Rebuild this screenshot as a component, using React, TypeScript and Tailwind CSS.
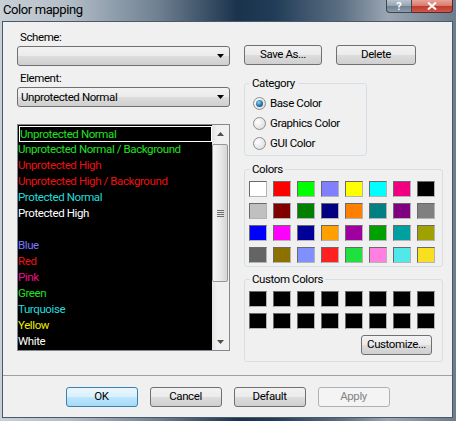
import React from "react";

const btn =
  "flex items-center justify-center rounded-[3px] border border-[#707070] bg-[linear-gradient(#f2f2f2_0%,#ebebeb_50%,#dddddd_50%,#cfcfcf_100%)] text-black";

const swatchColors = [
  ["#ffffff", "#ff0000", "#00ff00", "#8080ff", "#ffff00", "#00ffff", "#f00080", "#000000"],
  ["#c0c0c0", "#800000", "#008000", "#000080", "#ff8000", "#008080", "#800080", "#808080"],
  ["#0000ff", "#ff00ff", "#000099", "#ffa000", "#a000a0", "#00a000", "#00a0a0", "#a0a000"],
  ["#646464", "#8c7000", "#8090ff", "#ff2020", "#20e040", "#ff80e0", "#50e8e8", "#f8e020"],
];

const items: { t: string; c: string }[] = [
  { t: "Unprotected Normal", c: "#22e022" },
  { t: "Unprotected Normal / Background", c: "#22e022" },
  { t: "Unprotected High", c: "#ee1111" },
  { t: "Unprotected High / Background", c: "#ee1111" },
  { t: "Protected Normal", c: "#22dddd" },
  { t: "Protected High", c: "#ffffff" },
  { t: "", c: "#ffffff" },
  { t: "Blue", c: "#7777ff" },
  { t: "Red", c: "#ee1111" },
  { t: "Pink", c: "#ee1188" },
  { t: "Green", c: "#22e022" },
  { t: "Turquoise", c: "#22dddd" },
  { t: "Yellow", c: "#eeee00" },
  { t: "White", c: "#ffffff" },
];

function Arrow() {
  return (
    <svg width="7" height="4" viewBox="0 0 7 4">
      <path d="M0 0H7L3.5 4Z" fill="#000" />
    </svg>
  );
}

function Combo({ text }: { text?: string }) {
  return (
    <div className={btn + " h-[20px] w-[213px] !justify-between pl-[3px] pr-[5px]"}>
      <span className="leading-[16px]">{text ?? ""}</span>
      <Arrow />
    </div>
  );
}

function Swatch({ color }: { color: string }) {
  return (
    <div
      className="h-[16px] w-[18px] border border-t-[#6a6a6a] border-l-[#6a6a6a] border-b-[#b4b4b4] border-r-[#b4b4b4]"
      style={{ backgroundColor: color }}
    />
  );
}

function Radio({ checked, label }: { checked?: boolean; label: string }) {
  return (
    <div className="flex h-[20px] items-center gap-[4px] pl-[8px]">
      <div className="flex h-[13px] w-[13px] items-center justify-center rounded-full border border-[#8e8f8f] bg-[radial-gradient(circle_at_35%_35%,#ffffff_0%,#e6e6e6_60%,#cfcfcf_100%)]">
        {checked && (
          <div className="h-[7px] w-[7px] rounded-full bg-[radial-gradient(circle_at_40%_35%,#8fd4f8_0%,#1f72a8_55%,#0d3f66_100%)]" />
        )}
      </div>
      <span className="leading-[16px]">{label}</span>
    </div>
  );
}

export default function App() {
  return (
    <div className="flex h-[421px] w-[456px] flex-col bg-[linear-gradient(90deg,#c9d0d6_0%,#b3bdc6_15%,#6d7f90_35%,#1b334c_52%,#213c57_60%,#5d7084_75%,#9aa6b2_85%,#6c7c8c_100%)] font-['Roboto',sans-serif] text-[11.5px] tracking-[-0.4px] text-black">
      {/* Title bar */}
      <div className="flex h-[21px] items-start justify-between">
        <div className="pl-[3px] pt-[1px] text-[13px] leading-[18px] tracking-[-0.4px] text-black">Color mapping</div>
        <div className="flex pr-[3px]">
          <div className="flex h-[13px] w-[26px] items-center justify-center rounded-bl-[4px] border border-t-0 border-[#3d4653] bg-[linear-gradient(#b8c4cf_0%,#95a4b2_50%,#6f8091_50%,#8c9cab_100%)] text-[11px] font-bold leading-none tracking-[0px] text-white">
            ?
          </div>
          <div className="flex h-[13px] w-[41px] items-center justify-center rounded-br-[4px] border border-l-0 border-t-0 border-[#5a2a2a] bg-[linear-gradient(#e8a598_0%,#d57a6b_50%,#c0392b_50%,#d0584a_100%)]">
            <svg width="10" height="8" viewBox="0 0 10 8">
              <path d="M1 0.5L9 7.5M9 0.5L1 7.5" stroke="#fff" strokeWidth="2" />
            </svg>
          </div>
        </div>
      </div>

      {/* Client area */}
      <div className="mb-[3px] ml-[2px] mr-[3px] flex flex-1 flex-col border border-[#4b5967] bg-[#f0f0f0]">
        <div className="flex h-[353px] gap-[14px] pl-[14px]">
          {/* Left column */}
          <div className="flex w-[213px] flex-col pt-[7px]">
            <div className="h-[16px] pl-[3px] leading-[16px]">Scheme:</div>
            <div className="mt-[1px]">
              <Combo />
            </div>
            <div className="mt-[4px] h-[16px] pl-[3px] leading-[16px]">Element:</div>
            <div className="mt-[1px]">
              <Combo text="Unprotected Normal" />
            </div>
            <div className="mt-[17px] flex h-[227px] border border-[#828790] bg-black">
              <div className="flex flex-1 flex-col">
                {items.map((it, i) => (
                  <div
                    key={i}
                    className={
                      "h-[16px] whitespace-nowrap leading-[15px] " +
                      (i === 0 ? "ml-[1px] mt-[1px] border border-white pl-[0px] leading-[13px]" : "")
                    }
                    style={{ color: it.c }}
                  >
                    {it.t}
                  </div>
                ))}
              </div>
              <div className="flex w-[17px] flex-col bg-[linear-gradient(90deg,#e3e3e3_0%,#f0f0f0_30%,#f0f0f0_100%)]">
                <div className="flex h-[17px] items-center justify-center">
                  <svg width="7" height="4" viewBox="0 0 7 4">
                    <path d="M0 4H7L3.5 0Z" fill="#505050" />
                  </svg>
                </div>
                <div className="mt-[2px] flex h-[138px] w-[16px] items-center justify-center rounded-[2px] border border-[#979797] bg-[linear-gradient(90deg,#f6f6f6_0%,#e9e9e9_50%,#d6d6d6_100%)]">
                  <div className="flex flex-col gap-[1px]">
                    <div className="h-[1px] w-[7px] bg-[#6e6e6e]" />
                    <div className="h-[1px] w-[7px] bg-[#6e6e6e]" />
                    <div className="h-[1px] w-[7px] bg-[#6e6e6e]" />
                    <div className="h-[1px] w-[7px] bg-[#6e6e6e]" />
                  </div>
                </div>
                <div className="flex-1" />
                <div className="flex h-[17px] items-center justify-center">
                  <svg width="7" height="4" viewBox="0 0 7 4">
                    <path d="M0 0H7L3.5 4Z" fill="#505050" />
                  </svg>
                </div>
              </div>
            </div>
          </div>

          {/* Right column */}
          <div className="flex w-[199px] flex-col pt-[23px]">
            <div className="flex gap-[14px]">
              <div className={btn + " h-[20px] w-[78px]"}>Save As...</div>
              <div className={btn + " h-[20px] w-[80px]"}>Delete</div>
            </div>

            <fieldset className="mt-[10px] w-[123px] rounded-[3px] border border-[#d5dfe5] pb-[2px] pt-[2px]">
              <legend className="ml-[4px] px-[3px] leading-[16px]">Category</legend>
              <Radio checked label="Base Color" />
              <Radio label="Graphics Color" />
              <Radio label="GUI Color" />
            </fieldset>

            <fieldset className="mt-[5px] rounded-[3px] border border-[#d5dfe5] pb-[3px] pl-[4px] pt-[4px]">
              <legend className="ml-[1px] px-[2px] leading-[16px]">Colors</legend>
              <div className="grid grid-cols-[repeat(8,18px)] gap-x-[6px] gap-y-[6px]">
                {swatchColors.flat().map((c, i) => (
                  <Swatch key={i} color={c} />
                ))}
              </div>
            </fieldset>

            <fieldset className="mt-[4px] rounded-[3px] border border-[#d5dfe5] pb-[6px] pl-[4px] pt-[4px]">
              <legend className="ml-[1px] px-[2px] leading-[16px]">Custom Colors</legend>
              <div className="grid grid-cols-[repeat(8,18px)] gap-x-[6px] gap-y-[6px]">
                {Array.from({ length: 16 }).map((_, i) => (
                  <Swatch key={i} color="#000000" />
                ))}
              </div>
              <div className="mt-[6px] flex justify-end pr-[10px]">
                <div className={btn + " h-[20px] w-[71px]"}>Customize...</div>
              </div>
            </fieldset>
          </div>
        </div>

        {/* Separator + bottom buttons */}
        <div className="border-t border-[#a0a0a0]" />
        <div className="flex justify-center gap-[12px] pt-[11px]">
          <div className="flex h-[20px] w-[72px] items-center justify-center rounded-[3px] border border-[#3c7fb1] bg-[linear-gradient(#eaf6fd_0%,#d9f0fc_50%,#bee6fd_50%,#a7d9f5_100%)]">
            OK
          </div>
          <div className={btn + " h-[20px] w-[72px]"}>Cancel</div>
          <div className={btn + " h-[20px] w-[72px]"}>Default</div>
          <div className="flex h-[20px] w-[72px] items-center justify-center rounded-[3px] border border-[#adb2b5] bg-[#f4f4f4] text-[#838383]">
            Apply
          </div>
        </div>
      </div>
    </div>
  );
}
